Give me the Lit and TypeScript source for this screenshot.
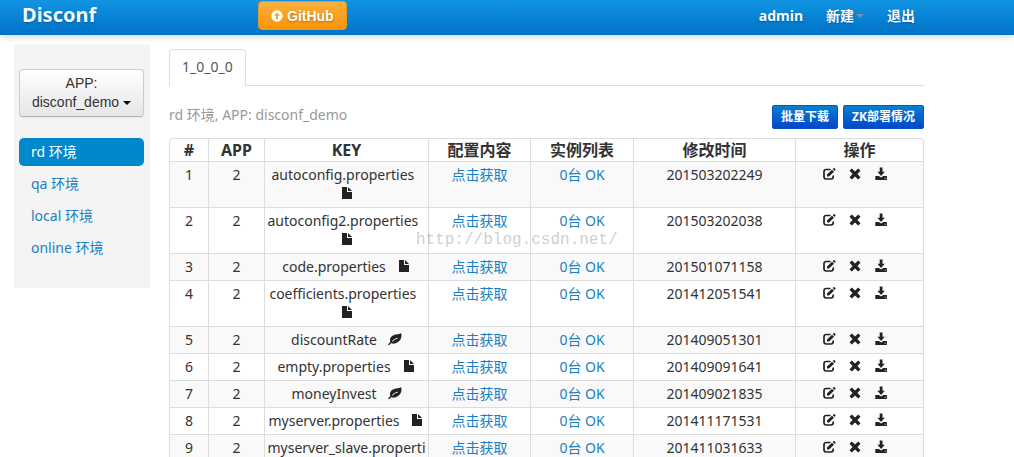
import { LitElement, html, svg, css } from "lit";
import { customElement, property, state } from "lit/decorators.js";

type IconName = "file" | "leaf" | "edit" | "remove" | "download" | "upload";

const ICONS = {
  file: svg`<path d="M2 1h5v5h5v7H2z"/><path d="M8 1l4 4H8z"/>`,
  leaf: svg`<path fill-rule="evenodd" d="M13 1c-1 1-3 1.300-5 1.600C4.500 3.100 2 5.200 2 8.200c0 .7.1 1.200.3 1.700C1.700 10.600 1 11.400.4 12c-.5.600.4 1.500 1 1 .7-.5 1.300-1.300 1.900-1.900.8.5 1.900.7 3.100.4C10.500 10.900 13.500 7.500 13.500 3.500c0-1-.2-1.800-.5-2.500zM4 9.300C5.300 7.300 7.200 6 9.800 5.700l.1.7C7.600 6.700 6 7.900 4.600 9.700z"/>`,
  edit: svg`<path d="M8.500 2.500H4.300Q2 2.500 2 4.800v5Q2 12 4.300 12h4.700Q11.200 12 11.200 9.800V8.500" fill="none" stroke="currentColor" stroke-width="1.700"/><path d="M5 9.500V7.400L10 2.700l2 2L7 9.500zM10.700 2l.8-.8q.5-.4 1 0l.9.9q.4.5 0 1l-.8.800z"/>`,
  remove: svg`<path d="M1.500 3.800L3.800 1.500 7 4.600l3.200-3.100 2.300 2.300L9.400 7l3.100 3.200-2.300 2.300L7 9.400l-3.200 3.100-2.300-2.300L4.600 7z"/>`,
  download: svg`<path d="M5.700 .6h2.800v4.200h2.300L7.100 8.900 3.400 4.800h2.300z"/><path fill-rule="evenodd" d="M1.300 9.100h3.600l2.200 1.500 2.200-1.500h3.600V13H1.300zM10.700 10.800v.9h.9v-.9z"/>`,
  upload: svg`<path fill-rule="evenodd" d="M7 .4a6.600 6.600 0 1 0 0 13.200A6.600 6.600 0 0 0 7 .4zM7 3l3.600 3.800H8.100V11H5.900V6.800H3.400z"/>`,
};

@customElement("glyph-icon")
class GlyphIcon extends LitElement {
  static styles = css`
    :host { display: inline-block; width: 14px; height: 14px; line-height: 0; }
    .icon { display: block; width: 100%; height: 100%; fill: currentColor; }
  `;
  @property() name: IconName = "file";
  render() {
    return html`<svg class="icon" viewBox="0 0 14 14" aria-hidden="true">${ICONS[this.name]}</svg>`;
  }
}

interface ConfigItem {
  id: number;
  key: string;
  time: string;
  kind: "file" | "leaf";
}

const ITEMS: ConfigItem[] = [
  { id: 1, key: "autoconfig.properties", time: "201503202249", kind: "file" },
  { id: 2, key: "autoconfig2.properties", time: "201503202038", kind: "file" },
  { id: 3, key: "code.properties", time: "201501071158", kind: "file" },
  { id: 4, key: "coefficients.properties", time: "201412051541", kind: "file" },
  { id: 5, key: "discountRate", time: "201409051301", kind: "leaf" },
  { id: 6, key: "empty.properties", time: "201409091641", kind: "file" },
  { id: 7, key: "moneyInvest", time: "201409021835", kind: "leaf" },
  { id: 8, key: "myserver.properties", time: "201411171531", kind: "file" },
  { id: 9, key: "myserver_slave.properties", time: "201411031633", kind: "file" },
];

@customElement("app-root")
class AppRoot extends LitElement {
  static styles = css`
    :host {
      display: block;
      position: relative;
      height: 100vh;
      overflow: hidden;
      background: #fff;
      color: #333;
      font: 14px/20px "Noto Sans", "Noto Sans CJK SC", sans-serif;
    }
    * { box-sizing: border-box; }
    a { color: #1a80c4; text-decoration: none; }
    button { cursor: pointer; margin: 0; }
    .navbar {
      display: flex;
      align-items: center;
      height: 35px;
      padding: 0 99px 4px 22px;
      background: linear-gradient(#1095e3, #0072c5);
      box-shadow: 0 1px 8px rgba(0, 0, 0, 0.2);
    }
    .navbar a { color: #f5faff; font-weight: 700; text-shadow: 0 1px 2px rgba(0, 0, 0, 0.3); }
    .navbar .brand { width: 236px; padding-bottom: 2px; font-size: 20px; line-height: 28px; }
    .navbar .github {
      display: flex;
      align-items: center;
      gap: 4px;
      height: 29px;
      padding: 0 12px;
      border: 1px solid #e09a28;
      border-radius: 4px;
      background: linear-gradient(#fbb040, #f89406);
      color: #fff;
      font-family: "Liberation Sans", sans-serif;
    }
    .github glyph-icon { width: 12px; height: 12px; }
    .links { display: flex; gap: 23px; margin-left: auto; }
    .menu { display: flex; align-items: center; gap: 2px; }
    .caret {
      border: 4px solid transparent;
      border-top-color: currentColor;
      border-bottom: 0;
    }
    .menu .caret { color: #6d91ad; }
    .page { display: flex; align-items: flex-start; gap: 19px; padding: 9px 90px 0 14px; }
    .sidebar {
      flex: 0 0 136px;
      padding: 25px 6px 26px 5px;
      background: #f4f4f4;
    }
    .app-select {
      display: block;
      width: 100%;
      padding: 4px 6px;
      border: 1px solid #ccc;
      border-bottom-color: #b3b3b3;
      border-radius: 4px;
      background: linear-gradient(#fff, #e6e6e6);
      box-shadow: 0 1px 2px rgba(0, 0, 0, 0.05);
      color: #333;
      font: 14px/19px "Liberation Sans", sans-serif;
    }
    .app-select .caret { display: inline-block; vertical-align: middle; color: #000; }
    .envs { display: grid; gap: 4px; margin-top: 21px; }
    .env { padding: 4px 12px; border-radius: 5px; }
    .env.active { background: #0088cc; color: #fff; }
    .main { flex: 1; min-width: 0; padding-top: 5px; }
    .tabs { display: flex; border-bottom: 1px solid #ddd; }
    .tab {
      margin-bottom: -1px;
      padding: 7px 12px 8px;
      border: 1px solid #ddd;
      border-bottom-color: #fff;
      border-radius: 4px 4px 0 0;
      color: #555;
    }
    .toolbar { display: flex; align-items: flex-start; gap: 5px; margin: 19px 0 9px; }
    .where { margin-right: auto; color: #999; }
    .action {
      height: 24px;
      padding: 0 8px;
      border: 1px solid #0a55bd;
      border-radius: 2px;
      background: linear-gradient(#0880cf, #0047cc);
      color: #fff;
      font: 700 12px/20px "Noto Sans", "Noto Sans CJK SC", sans-serif;
    }
    .table {
      width: 100%;
      table-layout: fixed;
      border: 1px solid #ddd;
      border-left: 0;
      border-radius: 4px;
      border-spacing: 0;
      text-align: center;
    }
    th, td { border-left: 1px solid #ddd; overflow-wrap: break-word; }
    th { height: 22px; padding: 0; font-size: 16px; line-height: 22px; }
    td {
      padding: 3px 1px 4px;
      border-top: 1px solid #ddd;
      line-height: 19px;
      vertical-align: top;
    }
    tbody tr:nth-child(odd) td { background: #f9f9f9; }
    th:first-child { border-top-left-radius: 4px; }
    .c-id { width: 39px; }
    .c-app { width: 56px; }
    .c-key { width: 164px; }
    .c-content { width: 102px; }
    .c-list { width: 103px; }
    .c-time { width: 162px; }
    td glyph-icon { color: #222; vertical-align: -1px; }
    .ops { display: flex; justify-content: center; gap: 12px; padding: 2px 10px 0 0; }
    .op {
      padding: 0;
      border: 0;
      background: none;
      line-height: 0;
      width: 14px;
      height: 14px;
    }
    .watermark {
      position: absolute;
      left: 416px;
      top: 230px;
      color: rgba(130, 130, 130, 0.4);
      font: 16px/20px "Liberation Mono", monospace;
      pointer-events: none;
    }
  `;

  @state() private env = "rd";

  private row(item: ConfigItem) {
    return html`<tr>
      <td>${item.id}</td>
      <td>2</td>
      <td>${item.key}&nbsp;&nbsp; <glyph-icon name=${item.kind}></glyph-icon></td>
      <td><a href="#">点击获取</a></td>
      <td><a href="#">0台 OK</a></td>
      <td>${item.time}</td>
      <td>
        <div class="ops">
          <button class="op" aria-label="edit"><glyph-icon name="edit"></glyph-icon></button>
          <button class="op" aria-label="remove"><glyph-icon name="remove"></glyph-icon></button>
          <button class="op" aria-label="download"><glyph-icon name="download"></glyph-icon></button>
        </div>
      </td>
    </tr>`;
  }

  render() {
    return html`
      <header class="navbar">
        <a class="brand" href="#">Disconf</a>
        <a class="github" href="#"><glyph-icon name="upload"></glyph-icon>GitHub</a>
        <nav class="links">
          <a href="#">admin</a>
          <a class="menu" href="#">新建<span class="caret"></span></a>
          <a href="#">退出</a>
        </nav>
      </header>
      <div class="page">
        <aside class="sidebar">
          <button class="app-select">APP:<br />disconf_demo <span class="caret"></span></button>
          <nav class="envs">
            ${["rd", "qa", "local", "online"].map(
              (name) => html`<a
                class="env ${name === this.env ? "active" : ""}"
                href="#"
                @click=${() => (this.env = name)}
              >${name} 环境</a>`
            )}
          </nav>
        </aside>
        <main class="main">
          <nav class="tabs"><a class="tab" href="#">1_0_0_0</a></nav>
          <div class="toolbar">
            <span class="where">${this.env} 环境, APP: disconf_demo</span>
            <button class="action">批量下载</button>
            <button class="action">ZK部署情况</button>
          </div>
          <table class="table">
            <thead>
              <tr>
                <th class="c-id">#</th>
                <th class="c-app">APP</th>
                <th class="c-key">KEY</th>
                <th class="c-content">配置内容</th>
                <th class="c-list">实例列表</th>
                <th class="c-time">修改时间</th>
                <th class="c-ops">操作</th>
              </tr>
            </thead>
            <tbody>${ITEMS.map((item) => this.row(item))}</tbody>
          </table>
        </main>
      </div>
      <div class="watermark">http://blog.csdn.net/</div>
    `;
  }
}
